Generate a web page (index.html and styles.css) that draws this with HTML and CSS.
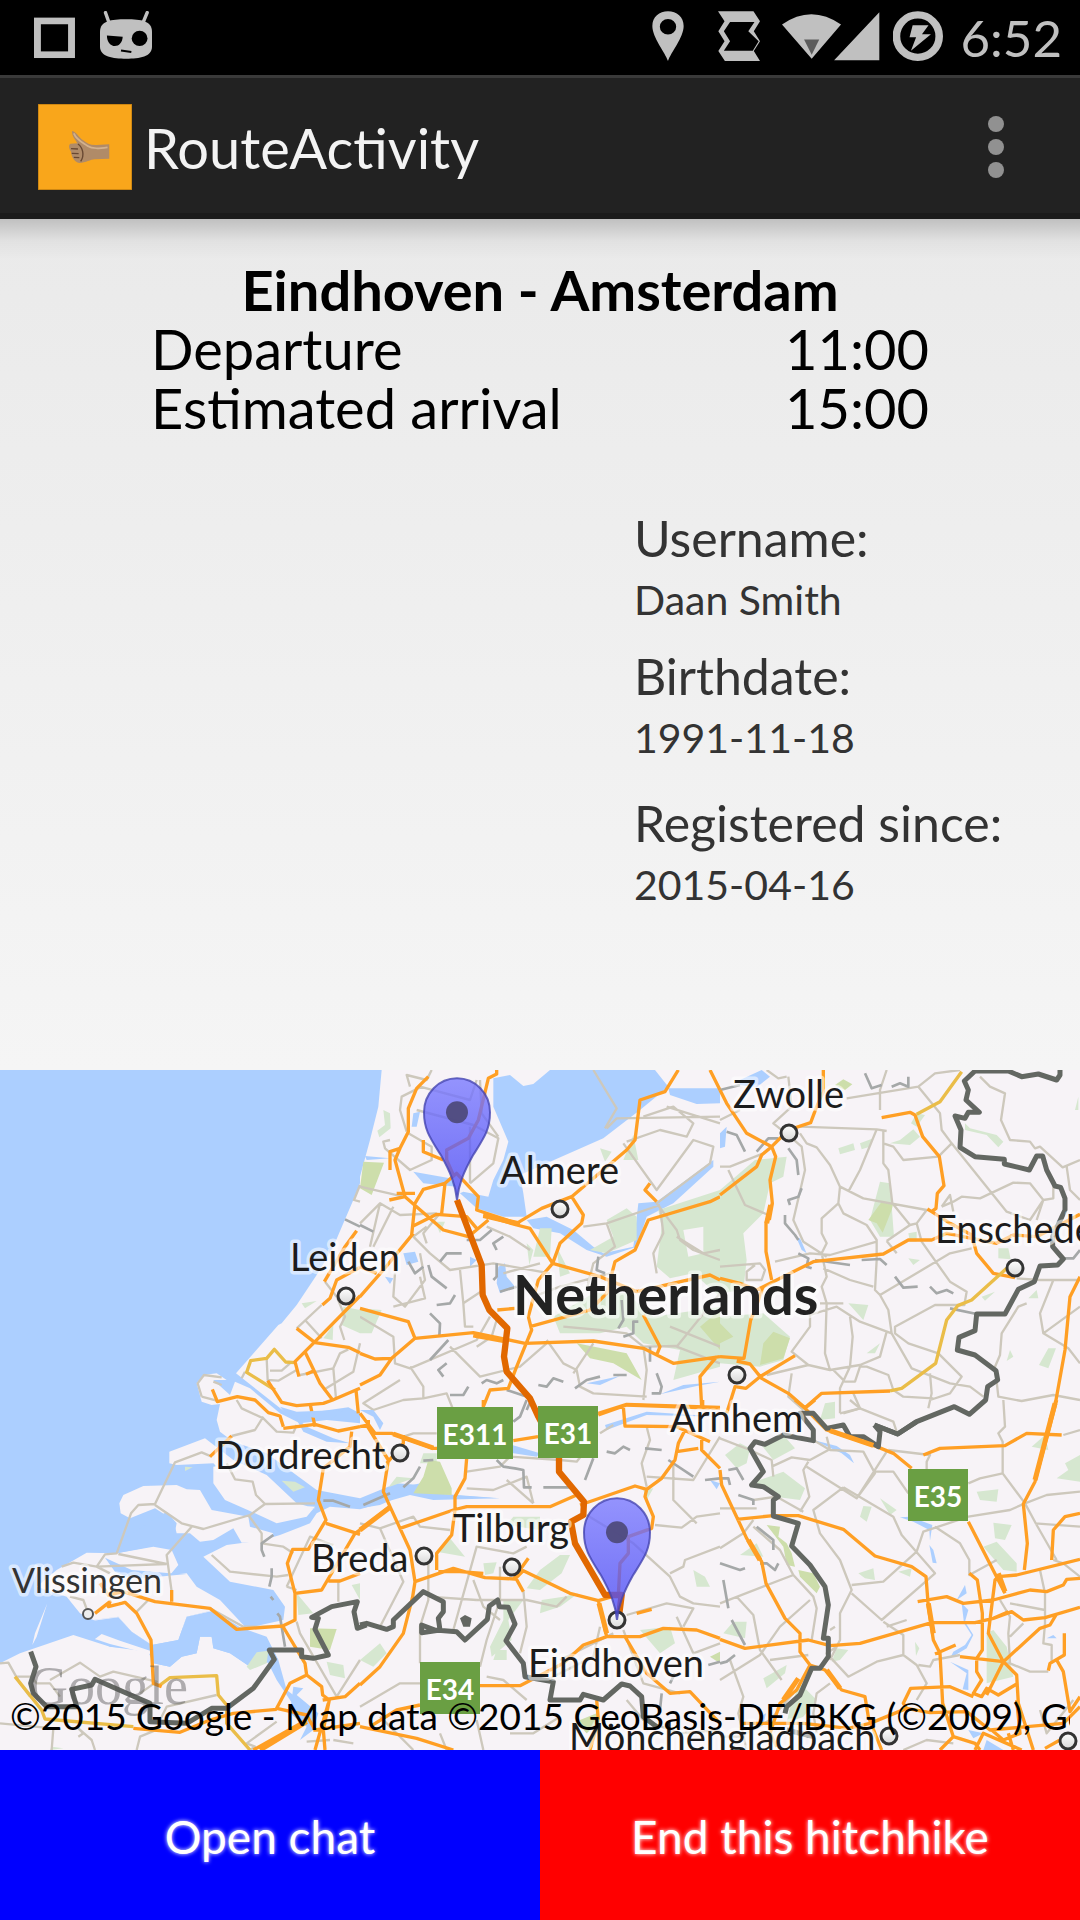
FILE: index.html
```html
<!DOCTYPE html>
<html lang="en">
<head>
<meta charset="utf-8">
<meta name="viewport" content="width=device-width, initial-scale=1">
<title>RouteActivity</title>
<link rel="stylesheet" href="styles.css">
</head>
<body>
<div class="screen">
  <div class="status-bar">
    <div class="status-group status-left">
      <svg class="icon" width="42" height="50" preserveAspectRatio="none" viewBox="98 32 122 151" aria-hidden="true"><rect x="108" y="62" width="99" height="102" fill="none" stroke="#c0c0c0" stroke-width="20"/></svg>
      <svg class="icon" width="52" height="50" preserveAspectRatio="none" viewBox="290 32 151 151" aria-hidden="true">
        <path d="M306 37l10 30M427 37l-12 30" stroke="#c0c0c0" stroke-width="10" stroke-linecap="round"/>
        <path d="M366 57C410 57 441 62 441 95V140C441 170 405 176 366 176S290 170 290 140V95C290 62 322 57 366 57Z" fill="#c0c0c0"/>
        <circle cx="405" cy="115" r="23"/><path d="M310 106L356 110C355 128 345 138 333 138S310 126 310 106Z"/><path d="M351 151l30 5" stroke="#000" stroke-width="6"/>
      </svg>
    </div>
    <div class="status-group status-right">
      <svg class="icon icon-location" width="32" height="50" preserveAspectRatio="none" viewBox="327 35 92 151" aria-hidden="true"><path fill="#c0c0c0" fill-rule="evenodd" d="M373 186C365 160 328 115 328 80C328 53 348 36 373 36S418 53 418 80C418 115 381 160 373 186ZM373 59a23 23 0 1 0 0 47a23 23 0 1 0 0-47Z"/></svg>
      <svg class="icon" width="42" height="50" preserveAspectRatio="none" viewBox="520 35 122 151" aria-hidden="true"><path fill="#c0c0c0" fill-rule="evenodd" d="M520 36H623L642 66L624 96L642 126L624 156L642 186H540L521 156L539 126L521 96L539 66ZM555 68L537 96L555 126L537 155H621L638 126L608 96L626 68Z"/></svg>
      <svg class="icon icon-signal" width="98" height="50" preserveAspectRatio="none" viewBox="703 35 284 151" aria-hidden="true"><path fill="#c0c0c0" d="M703 76Q788 14 874 76L789 179ZM985 39V184H854Z"/><path fill="#5c5c5c" d="M767 121H811L789 167Z"/></svg>
      <svg class="icon" width="50" height="50" preserveAspectRatio="none" viewBox="1028 32 145 151" aria-hidden="true"><ellipse cx="1100" cy="108" rx="62" ry="64" fill="none" stroke="#c0c0c0" stroke-width="22"/><path fill="#c0c0c0" d="M1085 75H1131L1112 102H1138L1080 152L1095 111H1076Z"/></svg>
      <time class="clock">6:52</time>
    </div>
  </div>

  <header class="action-bar">
    <svg class="app-icon" viewBox="110 312 273 258" preserveAspectRatio="none" aria-hidden="true"><path fill="#f9a61b" d="M110 312h273v258H110z"/><path fill="none" stroke="#c07d10" stroke-width="4" d="M110 312h273v258H110z"/>
      <path fill="#b08b68" d="M209 393C222 396 228 412 240 420C252 430 262 436 280 435L317 433V476L275 478C262 478 250 489 230 489C215 485 207 470 206 455C199 445 199 434 204 431L224 430C218 417 208 410 209 393Z"/>
      <path fill="none" stroke="#684832" stroke-width="4" d="M206 446l20 1M208 460l20 1M214 472l16 1M226 432c14 10 20 34 8 52"/>
      <path fill="none" stroke="#d3b28f" stroke-width="5" d="M214 400c8 20 26 28 40 38s36 7 58 4"/></svg>
    <h1 class="app-title">RouteActivity</h1>
    <button class="overflow" type="button" aria-label="More options"><span class="dot"></span><span class="dot"></span><span class="dot"></span></button>
  </header>

  <main class="content">
    <section class="trip">
      <h2 class="trip-title">Eindhoven - Amsterdam</h2>
      <table class="times">
        <tr><th scope="row">Departure</th><td>11:00</td></tr>
        <tr><th scope="row">Estimated arrival</th><td>15:00</td></tr>
      </table>
    </section>
    <dl class="profile">
      <div class="field"><dt>Username:</dt><dd>Daan Smith</dd></div>
      <div class="field"><dt>Birthdate:</dt><dd>1991-11-18</dd></div>
      <div class="field field-last"><dt>Registered since:</dt><dd>2015-04-16</dd></div>
    </dl>
  </main>

  <section class="map" aria-label="Route map">
    <svg class="map-canvas" viewBox="0 0 1080 680">
      <defs>
        <linearGradient id="pinFill" x1="0" y1="0" x2="0" y2="1"><stop offset="0" stop-color="#7878ff"/><stop offset="1" stop-color="#4848f5"/></linearGradient>
        <linearGradient id="townFill" x1="0" y1="0" x2="0" y2="1"><stop offset="0" stop-color="#fff"/><stop offset="1" stop-color="#d8d8d8"/></linearGradient>
        <g id="pin"><path d="M0 0C-5-46-18-80-48-134C-80-185-99-210-99-263A99 102 0 0 1 99-263C99-210 80-185 48-134C18-80 5-46 0 0Z" fill="url(#pinFill)" fill-opacity=".78" stroke="#4444b0" stroke-opacity=".8" stroke-width="6"/><circle cy="-263" r="33" fill="#4f4b7c" fill-opacity=".95"/></g>
        <circle id="town" r="8" fill="url(#townFill)" stroke="#333" stroke-width="3"/>
      </defs>
      <g transform="scale(.333333)">
        <!-- water -->
        <path class="water" d="M0 0H1145L1135 110L1110 210L1080 320V340L1060 390L1030 460L1000 530L950 615L890 705L845 760L835 765L708 910L860 1030L940 1027L1045 1012L1080 1030V1060L980 1050L900 1060L840 1030L750 955L705 935L690 975L640 930L680 930L650 910L610 915L590 940L605 995L635 1005L660 1002L650 1050L660 1085L700 1115L800 1150L950 1260L1080 1285L1190 1240L1260 1245L1300 1270L1500 1285L1300 1290L1230 1275L1080 1318L990 1310L950 1330L930 1360L840 1395L790 1410L720 1420L680 1425L610 1460L690 1535L820 1560L855 1610L850 1650L735 1675L640 1620L560 1640L535 1710L455 1725L395 1685L355 1640L280 1650L450 1725L640 1625L710 1680L800 1705L835 1770L860 1860L900 1890L940 1940L890 1920L830 1830L800 1770L750 1790L690 1750L640 1735L635 1700L600 1700L590 1750L545 1760L510 1790L460 1780L445 1740L330 1730L220 1695L60 1750L0 1780Z"/>
        <path class="land" d="M508 1145L615 1105L700 1170L800 1215L890 1300L945 1315L840 1320L790 1300L740 1245L690 1230L640 1180L530 1185L508 1180ZM358 1300L370 1275L430 1248L530 1245L560 1258L600 1260L635 1320L745 1340L750 1370L820 1390L790 1415L725 1418L700 1375L640 1410L600 1415L570 1390L530 1390L520 1350L465 1315L390 1345L362 1330ZM700 1180L760 1240L800 1300L945 1310L920 1340L830 1360L755 1325L675 1290L640 1240L640 1190ZM110 1550L170 1500L260 1448L350 1450L460 1430L515 1440L535 1485L510 1515L560 1510L590 1550L660 1590L735 1670L640 1620L560 1640L535 1710L455 1725L395 1685L355 1640L280 1650L240 1630L200 1580ZM285 1707L305 1692L410 1737L445 1737L450 1750L330 1722Z"/>
        <path class="water" d="M315 1463L395 1500L510 1510L560 1512L430 1525L380 1520L345 1505ZM380 1400L500 1325L530 1360L515 1430L460 1428L350 1450Z"/>
        <path class="water" d="M280 1652L355 1642L395 1685L455 1725L535 1710L560 1640L640 1622L720 1672L800 1700L835 1770L750 1790L690 1750L640 1735L635 1700L600 1700L590 1750L545 1760L510 1790L460 1780L445 1745L330 1730L285 1707Z"/>
        <path class="land" d="M285 1707L305 1692L360 1712L450 1742L450 1752L330 1722ZM97 1725L105 1690L142 1600L110 1700Z"/>
        <g transform="translate(1080 -30)">
          <path class="water" d="M400 55L450 45L490 78L520 72L570 30H885L925 80L840 150L730 235L560 310L480 345L490 400L500 470L430 470L350 445L300 400L310 395L385 410L400 360L430 300L445 245L400 140ZM925 85H1080V130L1010 132L930 105ZM500 480L560 470L640 510L700 560L730 580L820 560L835 430L890 425L1060 300V320L940 430L860 470L830 560L740 590L680 570L600 520L520 505ZM160 335L270 355L290 380L190 370ZM130 580L165 575L175 605L140 615ZM415 620L435 610L440 650L465 680L420 700L410 670ZM330 590L350 600L330 620ZM680 970L780 948L720 975ZM900 1003L970 975L1080 965L1010 978ZM15 288L90 295L20 300ZM75 650L100 655L90 672ZM160 160L180 155L170 200L155 200Z"/>
          <path class="green" d="M70 150L90 160L92 205L58 232L52 212L75 195ZM895 450L1080 390V710L1000 640L930 655L890 620L905 500ZM580 770L700 700L800 700L880 770L1080 740V920L940 960L960 870L850 850L800 800L720 820L600 820ZM740 480L800 445L830 470L830 540L740 580L690 570L760 530ZM540 505L575 505L570 590L520 590ZM225 485L255 485L240 520ZM820 225L835 300L790 300ZM0 745L65 750L35 820L0 820ZM500 550L520 570L508 615ZM720 265L755 275L735 305ZM590 560L630 640L600 650Z"/>
          <path class="land" d="M970 510L1030 500L1030 580L985 590Z"/>
          <path class="forest" d="M10 305L72 308L35 405L0 385ZM650 850L800 880L845 960L760 910L690 895ZM1080 750V870L1020 800Z"/>
          <path class="minor" d="M150 80L140 45L200 60L215 30M185 80L125 110L120 150L140 215M170 150L340 195L415 235L400 310L330 370M330 370V200M180 80L330 120L350 60M90 240L70 245L75 265L150 330L215 300V260L145 220M360 60L365 160L415 230M0 380L130 410M60 430L120 465L230 460M0 490L60 430L30 560M100 440L40 560M200 500L160 530L210 580L270 630L400 610L570 640M240 460L190 520L200 550M180 580L195 660L135 740L100 710L105 640M0 770L100 830L105 910L150 925L350 840L390 770M300 630L310 730L370 690M310 730L315 800L340 800M100 740L195 715L180 650M150 920L190 980V1015L130 1020L40 1050L10 1030L120 960M190 1015L260 1000L280 1050M270 860L360 950L480 920L560 850M350 860L395 830L410 780M560 840L610 910L650 930L660 980L700 1000L860 1010M610 800L720 810L800 820L850 860L860 930L850 1020M640 940L700 850M520 710L600 680L750 640M700 30L770 145L735 205M740 205L770 175L1080 170M850 170L940 140L1000 190L980 230L900 210L800 245M790 250L890 390L1000 240L1060 260L1050 310L890 430L950 510L960 540L1000 570L1080 600M900 440L910 520L880 580L890 640M740 490L900 435M740 490L765 560L700 610L680 690M670 500L740 490M950 530L1030 580L1080 570M920 140L1080 190M950 860L1080 700M950 860L1080 910M850 860L950 858M930 800L1080 860M380 500L450 530L510 570M430 640L540 610"/>
          <path class="rail" d="M320 540L360 540L395 510M430 530L400 550L410 570M410 610V650L400 660M205 615L215 650L260 685M145 605L165 640L190 620M240 605L260 580L305 580M285 705L270 730L230 735M210 760L240 790L238 830M265 840L210 900M260 910L235 930L250 950M270 1005L310 1005L325 980M365 970L380 960L410 970L430 960M535 975L560 980L580 955L610 965M645 985L680 960L720 950M760 945L800 945M715 590L710 630L735 640M785 720L790 780L775 805M835 785H820V820L790 830M870 860V905M890 940L905 980L900 1000L875 1000M440 990L515 1015L500 1050M420 695L470 680M0 495L40 515"/>
          <path class="road" d="M205 50L170 85L145 145V215L120 265L90 275V330M120 265L105 300L135 410L250 510L325 530L385 480M250 300L190 275V240M135 410L88 420M110 400H165M245 460L255 370L190 388L165 430L155 525M255 370L290 340L355 410L350 450L470 490L545 445L635 410L670 465L665 490L600 550L578 610L720 650L830 695L1050 645L1080 660M410 30V42L385 55L355 180L325 235L260 270V300L280 345M370 465L470 495L510 505L578 610L535 660L505 770L515 810L470 920L445 985L390 990L370 1040M635 410L800 270L825 240L840 120L915 95L955 30M1050 30L1080 90M1080 410L1050 425L865 480L825 570L765 605L740 700L690 750L510 800M160 520L70 630L0 710M50 640L0 620M0 745L145 785L165 835L340 818L495 850L700 843L850 865L940 910L1080 890M165 835L95 895L45 897L0 880M95 895L60 945L0 975M412 750L465 745M850 765L900 860L890 885M1070 890L1020 950L1025 1040M870 370L855 390L890 425M715 1060L800 1033L1080 1042M155 500L230 463L320 470L350 505"/>
        </g>
        <g transform="translate(0 -30)">
          <path class="green" d="M1030 740L1080 750V820L1025 795ZM905 730L950 723L915 745ZM1000 795L998 840L970 835Z"/>
          <path class="minor" d="M1080 375L1062 420L1080 425M975 665L1010 710L1035 770L1020 800L1033 840M915 780L965 835M965 735L890 805M800 895L803 960L835 962L890 930M810 932H845L870 910M900 945L1000 925L1008 1015M1080 850L1060 935L970 990M1000 925L1020 880L1045 868M640 965L665 975M605 1010L593 970L612 945L665 952M605 1010L650 1022M735 935L725 955"/>
          <path class="yellow" d="M885 908L857 906L823 868L800 895L752 902L740 937L825 990"/>
          <path class="road" d="M1070 512L1035 560L973 665M1080 622L1010 660L990 715L967 735M1080 708L945 845L885 905L897 950M890 805L945 848L1045 862L1080 878M915 875L960 970L998 1020L1080 985M942 932L918 943M803 962L845 1027L890 1037L970 1030L998 1020M930 1030L945 1100M1068 990L1075 1060M637 988L652 1025L712 1010L765 1020L805 1058L840 1068L850 1100"/>
          <path class="rail" d="M1035 478L1080 500"/>
        </g>
        <g transform="translate(2160 -30)">
          <path class="water" d="M60 60L125 30L150 50L110 82L60 75ZM0 220L20 200L15 260L0 265ZM230 535L240 535L260 580L245 570Z"/>
          <path class="green" d="M0 390L105 300L200 290L190 350L150 370L130 460L70 520L80 600L70 690L0 700ZM0 770L130 760L210 830L190 900L120 920L0 910ZM540 240L580 208L600 230L570 255L510 250ZM355 265L400 250L405 270L360 283ZM420 250L460 235L450 260L425 268ZM480 365L510 370L522 530L480 530L450 480ZM735 190L750 205L830 225L850 245L835 262L800 225L735 210ZM385 730L445 735L430 780ZM565 520L590 515L590 545L570 545ZM835 565L865 565L872 598L835 595ZM985 865L1008 865L985 925L957 915ZM565 595L600 600L580 615ZM870 870L880 890L860 903ZM440 880L480 850L465 880ZM1075 110V150L1065 150ZM785 710L825 695L795 722ZM590 160L615 165L590 200L573 190ZM950 690L955 715L925 715Z"/>
          <path class="forest" d="M485 425L520 430L515 450L488 518L470 490L445 480ZM370 58L397 73L375 90L345 75ZM0 790L40 830L0 850ZM160 815L210 835L190 895L120 915L130 850Z"/>
          <path class="minor" d="M200 50L175 55L140 30M205 50L215 140L160 190L210 230L245 260L255 330L220 480L250 545L320 590M240 200L470 208L500 213M240 220L260 250L290 262L330 315L360 380L355 430L305 475V520L320 550L305 580L320 650L305 680L320 730L315 880L330 930M470 208L420 330L385 395M500 30L480 90V150M380 115L595 80L645 40L720 30M595 80L660 160L665 210L695 250L860 455L930 480L970 420L930 370L880 368L780 415L725 410L700 425L665 440M490 213V310L505 330L517 430L570 495L590 490L620 450L430 415L360 380M490 250L520 260L550 300L655 290L695 250M355 430L370 460L440 495L470 540V600L465 690L480 705L690 580L755 565M500 543L570 495M500 543L530 580M590 490L605 545L690 665L740 695L733 735L645 735L525 800V820L565 850L655 880L725 950L690 1000L630 1020M480 705L505 750L515 820L575 925L690 970L750 980L790 1010M515 820L420 785L350 740L270 765L270 800L215 875L265 915L330 930L420 915L480 890L500 815M390 770L398 830L390 920L360 985V1060M340 930L375 965H405L420 920L440 920L505 945L520 990L550 1010L640 1015M265 915L140 945M215 940L205 1010L250 1050M0 320H30L130 280M25 330L75 435L145 465M0 620L120 610L135 630L125 660H80V635L105 615M165 605L270 580L330 585L470 545M310 625L390 660L460 680M300 730H370M780 50L810 80L855 100L843 180L870 240L930 245L945 265L960 260L1028 322L1080 300M1040 320L1050 390L1080 420M950 480L970 420L1000 415V370M890 655L960 660H1080M1000 660L960 760L970 820L1045 865L1080 910M970 820L1080 740M920 730L895 740L845 820L840 885L825 920L835 1010L905 1023L1000 1005L1080 1020M0 180L60 150M630 940L635 1000L625 1045M400 1000L420 1045L370 1060M665 440L690 405L700 455"/>
          <path class="rail" d="M435 40L455 85L485 75M515 80L540 70L565 80V50M20 215L50 225L75 275M110 275L145 235L175 235M205 265L230 300L235 345M245 385L235 410L205 420L210 435M195 465L195 490L225 525L235 540M235 580L265 595L260 620L275 625M285 600L390 615M425 600L480 597L500 615M525 650L550 683L593 680M630 680L650 700L680 690L700 700M690 745L770 762M1030 595H1060L1080 570M0 90L60 75"/>
          <path class="road" d="M0 90L20 130L80 220L155 260L205 210L272 188L290 140L310 95V30M155 260L125 285L110 320L0 405M155 260L167 290L150 360L157 430L138 490V575L155 660M157 430L148 480M485 173L570 157L585 165L608 230L658 290L672 377L652 400L648 445L635 455L622 447M0 655L60 670L110 690L280 605L490 582L565 540H635L680 520L830 550L880 525L950 530L1080 463M635 455L690 490L755 525L770 580L820 640L885 653M130 680L105 750L92 780L72 895L0 890M50 903L90 912L125 955L205 1000L255 1043L305 1000L510 993M225 887L120 950L78 985L45 980L20 1060M1080 650L1050 710L1035 870L1008 1020L990 1080"/>
          <path class="yellow" d="M725 35L660 125L590 163M860 625L755 720L713 737L680 780L647 910L545 985L510 993"/>
          <path class="border" d="M1020 30V45L1010 60L955 42L905 50L865 33H765L733 63L745 90L738 120L778 157H745L735 175L705 168L723 210L720 262L765 290L853 298V312L928 330L950 288H968L980 330L1005 378L1022 382L1035 415V450L998 530V560L1030 597L1013 615L960 618L943 665L895 688L855 762H770L765 812L717 832L712 870L765 885L828 932L833 960L803 980L797 1020L748 1063L703 1040L590 1085L533 1122L463 1095"/>
        </g>
        <g transform="translate(0 990)">
          <path class="green" d="M555 200L578 202L555 213ZM845 242L885 245L915 262L880 275ZM890 580L940 640L895 645ZM740 800L770 757L805 752L800 790L750 810ZM980 785L1030 795L1035 835L990 825ZM1055 555L1080 550V600ZM155 1040L190 1045L150 1050Z"/>
          <path class="forest" d="M930 685L1010 687L990 750L930 740Z"/>
          <path class="water" d="M840 20L890 35L1020 30L1040 25L990 60L960 55L860 45ZM880 860L910 865L890 885L920 910L955 940L940 990L900 1020L920 980L870 940ZM885 50L920 80L1000 115L1050 130L980 125L910 95Z"/>
          <path class="minor" d="M710 0L725 25L790 55L830 95L880 98L890 75M790 50L765 90L695 108M635 170L605 157L525 187L465 312L415 315L393 340L350 460L315 463L290 500M465 315L545 370L610 387L750 345L795 312L945 310M745 345L785 400V430L850 440L880 460M680 190L705 238L758 245L768 285L795 312M575 380L500 465L515 575M185 500L220 488L290 500L500 492M355 462L500 492M290 500L330 520M635 465L690 515L830 530L865 525M210 590L250 600L265 640M445 600L410 635M630 625L730 680H820M0 790L25 788L60 850L90 890M45 830H95L110 850H150L180 890M150 840L240 788L300 830L340 815L470 845L420 880M650 885L500 920L480 960M0 970L160 985L155 1050M235 985L275 1020L285 1050M235 985L250 1000L235 1010M480 985L420 1010L410 1050M890 665L900 700L1010 890L1080 780M860 560L930 410L1000 435M860 560L890 570M1015 540V605M830 965L740 1030L765 1040L750 1050M990 1020L920 1025M1000 1020L1060 1030"/>
          <path class="rail" d="M820 405L785 430V450L793 470M815 505V530L808 560M812 590L820 600M832 640L840 650L855 740M970 302L1000 302L1050 320"/>
          <path class="yellow" d="M45 830L125 930L135 957L400 980M480 855L510 833L650 827L655 885L680 915V970L750 1050"/>
          <path class="road" d="M695 108L630 170M850 85L945 73L1015 93L1080 80M1055 95L1050 140L970 205L955 300L978 360L925 448H878L862 490L885 580V660L848 678L710 688L630 625L465 605L370 575L325 585L300 550M848 678L915 790L920 825L965 860L968 885L988 900L970 990L975 1050M885 580L965 570L1065 400L1080 390M978 370L1080 403M985 543H1020L1080 520M285 640L330 605L325 620L375 607L410 640L453 720L460 850L485 860M515 570V605M920 825L870 850L830 925L920 945L945 990L1080 970M400 985L540 997L630 960L700 940L830 928M920 960L760 1050M968 900L1035 890L1080 850M985 910L945 1050M940 990H975"/>
          <path class="border" d="M92 755L108 800L92 850L100 880L140 920H230L215 868L275 855L285 838L380 880L450 910V965L560 970L635 925H680L760 865L823 778L808 750H905V770L940 775L985 765L945 688L955 655L935 652L995 620L1072 605L1062 635L1072 685L1100 675"/>
        </g>
        <g transform="translate(1080 990)">
          <path class="water" d="M0 300L75 265L130 262L200 245L240 225L200 280L410 295L210 290L150 275L60 315L0 325ZM440 130L540 160L530 170L460 160ZM735 75L860 35L1080 50L860 45L740 90ZM0 30L40 30L70 70L60 90L40 50ZM1050 240L1080 250L1070 268Z"/>
          <path class="green" d="M110 230L160 235L85 262ZM190 160L230 160L230 190H180ZM270 415L315 470L230 455ZM370 490L410 487L400 520L375 525ZM630 465L605 520L540 570L500 565L540 510L600 465ZM430 600H490L445 660L455 720L395 770L390 740L430 660ZM545 600L610 590L655 580L600 620L540 640ZM840 690L930 680L945 730L900 760ZM1000 510L1035 530L1050 560L1010 560ZM460 350H540V390L440 375ZM850 270L880 265L860 300ZM60 730L80 760L40 800L0 780ZM410 750L440 750V780H400Z"/>
          <path class="forest" d="M205 180L240 185L275 265L275 285L160 280L190 230ZM660 960L710 940L720 970L680 1000L660 980ZM1050 770L1080 755V790Z"/>
          <path class="minor" d="M130 110L160 100L230 100M320 215L420 200L450 170L600 180L650 185L700 120M320 265L400 270L500 230L520 310M440 240L520 310M60 385L160 350L180 380L270 390M0 370L60 385L130 545L60 680M170 480L205 490V600L180 680V790M205 590L350 600M280 690L350 440L460 460L500 440M420 500V600L380 720L360 800M340 540L370 620L420 660M350 600L500 600L590 620L620 590M490 570L500 680L480 760M380 830L430 840L500 900M560 840L700 770L720 680M600 780L760 700M790 690L850 850L960 880M680 345L820 430L930 530L960 590L1000 610L1080 620M800 645L920 610L1000 625L970 680M930 520L970 500L975 480L1080 440M885 375L965 383L1010 350L1080 340M860 80L870 120L845 190L860 260M860 230L1000 240L1080 110M940 180V300L1010 370M720 100L760 75M800 900L850 960L960 1000L1080 990M0 920L120 850L180 850M60 950L160 1050M240 1000L260 1050M350 960L370 1050M450 1000L520 1000L600 950M950 650L1000 760L1080 730"/>
          <path class="rail" d="M500 0L480 50L460 65M410 180L430 200L465 205L490 210L492 262H515M550 262H640M700 175L675 240M740 155L765 160L790 140L810 150M855 145L905 150M925 180L1000 230M1035 240L1080 235M180 200L160 235L130 262M10 315L90 280M220 180L190 182M1045 795L1080 785M930 850L945 820M905 880L900 930"/>
          <path class="road" d="M370 0V25M0 40L45 100H95L220 145H240M0 80L25 75V60M20 75L85 180L70 275L90 320L150 450L165 545L158 590L130 700L60 800L0 855M0 390L90 320M120 385L280 330L320 320H570L650 285M80 190L130 130V105M320 175L315 235L285 290V330L275 405L230 460V510M165 545L280 505L375 533L465 537L490 512L630 580L715 602L740 710L840 710L910 685L1010 690L1080 715M235 515H300L370 520M505 475L465 530L490 575M460 122L534 110M715 45L800 15L1080 25M790 20L795 78L950 80L1050 125M660 315L825 258L860 268L905 235L945 180L955 130L975 90M950 155L1015 145M860 268L855 290L880 350L875 385L805 410V460L780 490L775 585L715 602M740 710L670 735L610 790L480 857L360 857M795 710L860 820L930 880L990 875L1080 970M30 980L110 930L180 915M0 980L170 1015L280 1050M710 900L715 960L690 1050M830 640L875 628M1025 120V150L1080 205M1028 0V20"/>
          <path class="border" d="M0 675L20 670L80 688L100 680V660L190 575L250 605V635L235 655L240 690L185 698V675L225 690L290 695L315 720L382 658L388 618L413 600L418 620L445 622L465 672L438 722L490 790L495 830L580 845L570 900L660 900L670 883L730 900L785 852L810 858L845 890L850 950L890 980"/>
          <path fill="#636762" d="M300 655L315 645L335 655L330 680L310 680Z"/>
        </g>
        <g transform="translate(2160 990)">
          <path class="water" d="M280 120L350 138L390 165L402 190L365 160ZM540 352L570 350L637 375L630 422L628 390L580 365ZM628 435L640 450L650 490L638 488ZM710 600L735 555L740 580ZM725 610L745 630L735 665L760 705L740 745L690 775L700 755L735 735L755 705L732 670ZM690 785L745 810L745 870L728 868L740 820ZM980 715L1000 705L1010 715ZM120 950L138 940L130 975ZM745 990L790 1000L760 1015ZM800 1020L850 1050H790Z"/>
          <path class="green" d="M15 165L60 130L90 145L80 190L50 205ZM120 130L190 105L225 145L160 180ZM105 245L190 215L255 265L240 300L165 290ZM60 465L110 430L130 470ZM420 350L430 318L455 320L440 365ZM770 275L835 268L830 305L780 300ZM820 368L875 375L855 420L825 415ZM790 440L830 425L890 490L890 515L850 510ZM1080 165L1035 190L1045 210L1010 235L1080 245ZM935 140L975 105L985 150ZM315 10L345 5L345 55L300 60ZM800 700L820 690L860 740L880 830L800 850ZM240 850L290 900L250 950L200 970L210 920ZM10 700L40 665H80L75 715ZM130 835L200 795L195 820L140 865ZM350 745L385 750L360 780L335 785ZM585 725L598 745L588 768ZM415 520L460 505L465 540L435 535ZM480 295L530 330L510 345ZM535 515L575 505L570 530Z"/>
          <path class="forest" d="M140 375L180 380L175 410L200 430L215 460L225 500L200 495L190 440ZM235 510L280 520L300 560L290 580L240 530Z"/>
          <path class="minor" d="M0 115L90 150L155 180L160 230M325 150L270 180L215 172L155 200M280 120L330 150L430 155L465 220L410 295L260 200M265 185L250 210L268 290L240 335M320 110L330 150M370 262L280 330L300 400L360 480L395 570L360 640V720L330 780M370 262L520 350L545 405L645 520L485 660L395 580M395 555L490 545L590 455L610 395L745 350L870 330L915 310M465 215H520L565 280M500 155L410 295M505 150L630 165L620 185V210M850 0L855 80L835 100L848 125V220L780 235L745 250M848 220L915 310L950 375L1010 480M915 310L980 285L1080 275M945 370L1080 380M645 380L720 430L748 480V525L830 480M0 445L70 400L100 360M0 325H110M100 300L170 290L250 335M0 610L220 525L180 450L100 380M220 525L280 590L290 625L275 720M50 590L100 645L120 750L185 840M0 840L120 765L180 680L270 600M150 780L265 765M30 780L70 890L55 940L80 1050M350 740L320 760L385 830L470 785L550 765V705L490 665M345 680L330 690M550 765L590 795L620 850L590 900M390 0L420 25L520 65L530 95M360 40L420 25M870 610L975 630M840 600L870 650L865 700L870 790L850 790M870 790L930 815H985M960 510L975 580V670L970 730L995 735V790M910 670L870 710M560 660L500 680M0 1010H60L150 960L220 880M550 1050L620 1020L700 1030M960 930L980 1000L1060 900M1000 480L1030 490L1080 530M595 795L630 800L640 780L720 765M1030 105L1080 90M290 1000L280 940L290 880L330 850"/>
          <path class="rail" d="M5 235H25L30 255M25 210L50 205L70 240M55 285L100 300V315M110 380L160 420V450M120 490L140 490L165 510L175 490M0 490L60 510L75 505M10 540L25 625M35 660L75 735M0 790L20 785L45 765"/>
          <path class="road" d="M225 0L255 25L320 90L470 140L520 160L575 205M255 25L285 0M0 210L5 255L80 415L125 485L138 550L195 655L240 700V755L270 795M50 358L160 347H235L370 388L465 468L575 500L618 530L625 620L640 720L660 760L668 910L700 1010L765 1030L780 1050M0 718L75 745L265 720L330 737L420 730L635 668H765L820 655L875 635L910 660L975 653L1080 622M610 165L660 145L855 137L920 100L1025 105M1010 0L945 245L910 312L922 430L913 510M745 365L855 580M835 530L890 525L1080 478M835 530L825 540L805 700L850 785L890 825L895 910L940 1050M748 520L772 540L787 640V750L770 775V815L785 840L760 880L785 890L800 865L835 885L890 852M593 605L680 590L730 610L820 600L930 570L980 575L1030 555L1040 538L1080 535M995 480L1000 390L1035 350L1080 340M820 655L865 635M850 785L720 770M800 885L850 785L960 685L990 675L1008 645M645 762L707 735M985 812L990 790L1033 765V700M1010 780L1030 815L1050 935L1080 890M270 795L315 810L365 870L435 890L445 950L485 1050M270 795L230 870L180 910L150 1000L170 1040M60 970L250 970L385 985L450 970L560 925L630 938L740 935L810 990L1030 970L1080 920M560 925L550 910L572 865L690 860L760 890M765 1050L790 1000L905 1050M865 1000L880 1050M975 1045L1020 1020M660 1050L700 1010M815 990L850 1020L900 1000L890 900"/>
          <path class="border" d="M463 75L480 95L475 140L430 110H390L370 75L320 85L280 40H240L280 90V122L190 105L135 133L105 125L90 145L130 215L95 255L130 260L175 290L160 300V348L235 370L215 438L270 495L315 560L325 615L310 715H325V770L300 805H275L240 885L200 920L195 940M463 75L533 102L590 65M200 990L280 1010"/>
        </g>
        <path class="major" d="M3165 1000L3105 1230M2490 1082L2620 1126M2995 1510L3015 1565M2785 1600L2800 1690M2480 1800L2520 1855M2245 1410L2280 1470M2395 1825L2350 1890M1080 1380L1170 1312M1180 1092L1300 1134M1797 1600L1820 1690M1450 437L1560 462M1420 795L1510 812M2312 405L2300 460M920 1955L780 2040"/>
        <path class="route" d="M1371 390L1445 585L1448 675L1468 720L1522 775L1512 860L1520 905L1590 985L1615 1040L1677 1160V1205L1752 1295L1750 1335L1713 1355L1725 1420L1815 1575H1865L1858 1630"/>
      </g>
      <g class="towns">
        <use href="#town" x="346" y="226"/><use href="#town" x="560" y="139"/><use href="#town" x="789" y="63"/><use href="#town" x="1015" y="198"/><use href="#town" x="737" y="305"/><use href="#town" x="400" y="383"/><use href="#town" x="424" y="486"/><use href="#town" x="512" y="497"/><use href="#town" x="617" y="550"/><use href="#town" x="889" y="666"/><use href="#town" x="1068" y="671"/><circle cx="88" cy="544" r="5" fill="#eee" stroke="#555" stroke-width="2"/>
      </g>
      <g class="labels">
        <text x="290" y="201">Leiden</text><text x="500" y="114">Almere</text><text x="733" y="38">Zwolle</text><text x="935" y="173">Enschede</text><text x="670" y="362">Arnhem</text><text x="215" y="399">Dordrecht</text><text x="311" y="502">Breda</text><text x="453" y="472">Tilburg</text><text x="528" y="607">Eindhoven</text><text x="569" y="681">Mönchengladbach</text><text class="soft" x="12" y="523">Vlissingen</text>
        <text class="country" x="513" y="245">Netherlands</text>
      </g>
      <g class="shields">
        <path fill="#6a9f43" d="M437 337h76v52h-76zM538 336h60v52h-60zM420 592h60v52h-60zM908 399h60v52h-60z"/>
        <text x="475" y="375">E311</text><text x="568" y="374">E31</text><text x="450" y="630">E34</text><text x="938" y="437">E35</text>
      </g>
      <g transform="scale(.333333)"><use href="#pin" x="1371" y="390"/><use href="#pin" x="1851" y="1650"/></g>
      <text class="watermark" x="29" y="634">Google</text>
    </svg>
    <p class="attribution">©2015 Google - Map data ©2015 GeoBasis-DE/BKG (©2009), Google</p>
  </section>

  <footer class="actions">
    <button class="action chat" type="button">Open chat</button>
    <button class="action end" type="button">End this hitchhike</button>
  </footer>
</div>
</body>
</html>
```
FILE: styles.css
```css
* { box-sizing: border-box; }

body {
  margin: 0;
  font-family: Lato, sans-serif;
  color: #000;
}

h1, h2, p, dl, dd { margin: 0; }
button { border: 0; padding: 0; font: inherit; }

.screen {
  display: flex;
  flex-direction: column;
  min-height: 100vh;
}

.status-bar {
  display: flex;
  justify-content: space-between;
  height: 75px;
  padding: 11px 18px 0 34px;
  background: #000;
}
.status-group { display: flex; align-items: flex-start; }
.status-left { gap: 24px; }
.status-right { gap: 18px; }
.icon { display: block; flex: none; }
.icon-location { margin-right: 16px; }
.icon-signal { margin: 0 -5px 0 4px; }
.clock { font-size: 51px; line-height: 54px; color: #c0c0c0; }

.action-bar {
  display: flex;
  align-items: center;
  gap: 12px;
  height: 144px;
  padding: 2px 64px 0 38px;
  background: #222;
  border-top: 3px solid #3a3a3a;
  border-bottom: 6px solid #1b1b1b;
}
.app-icon { width: 94px; height: 86px; flex: none; }
.app-title {
  flex: 1;
  padding-top: 2px;
  font-size: 56px;
  font-weight: 400;
  line-height: 66px;
  color: #f3f3f3;
}
.overflow {
  display: flex;
  flex-direction: column;
  align-items: center;
  gap: 7px;
  width: 40px;
  background: none;
}
.dot { width: 16px; height: 16px; border-radius: 50%; background: #919191; }

.content {
  flex: 1;
  padding-top: 41px;
  background:
    linear-gradient(rgba(0, 0, 0, .18), rgba(0, 0, 0, .04) 22px, transparent 40px),
    linear-gradient(#eaeaea, #f5f5f5);
}
.trip { margin: 0 151px; font-size: 56px; line-height: 59px; }
.trip-title { font-size: 56px; line-height: 59px; font-weight: 700; text-align: center; }
.times { width: 100%; border-collapse: collapse; }
.times th { padding: 0; font-weight: 400; text-align: left; }
.times td { padding: 0; text-align: right; }

.profile {
  display: flex;
  flex-direction: column;
  gap: 14px;
  margin: 69px 0 0 634px;
  color: #333;
}
.field dt { font-size: 50px; line-height: 64px; }
.field dd { font-size: 41px; line-height: 60px; }
.field-last { padding-top: 9px; }

.map { position: relative; overflow: hidden; background: #f7f3f7; }
.map-canvas { display: block; width: 100%; height: auto; }
.water { fill: #accfff; }
.land { fill: #f7f3f7; }
.green { fill: #d6e7d0; }
.forest { fill: #cddeab; }
.minor, .road, .yellow, .major, .rail, .border, .route {
  fill: none;
  stroke-linejoin: round;
}
.minor { stroke: #cdc8bc; stroke-width: 7; }
.rail { stroke: #a5a8a8; stroke-width: 8; }
.road { stroke: #ff9f24; stroke-width: 10; }
.yellow { stroke: #eabd48; stroke-width: 10; }
.major { stroke: #ff9f24; stroke-width: 15; }
.border { stroke: #636762; stroke-width: 15; }
.route { stroke: #e16800; stroke-width: 19; }

.labels text {
  font-size: 38px;
  fill: #1c1c1c;
  stroke: rgba(255, 255, 255, .55);
  stroke-width: 7px;
  stroke-linejoin: round;
  paint-order: stroke;
}
.labels .soft { font-size: 34px; fill: #333; }
.labels .country { font-size: 56px; font-weight: 700; fill: #222; }
.shields text { font-size: 28px; font-weight: 700; fill: #fff; text-anchor: middle; }
.watermark { font-family: "Liberation Serif", serif; font-size: 54px; fill: #555; fill-opacity: .45; }

.attribution {
  position: absolute;
  left: 10px;
  right: 10px;
  bottom: 10px;
  overflow: hidden;
  font-size: 37px;
  line-height: 48px;
  white-space: nowrap;
}

.actions { display: grid; grid-template-columns: 1fr 1fr; }
.action {
  height: 170px;
  padding-top: 2px;
  font-size: 46px;
  color: #fff;
  text-shadow: 0 0 4px #fff;
}
.chat { background: #00f; }
.end { background: #f00; }
```
